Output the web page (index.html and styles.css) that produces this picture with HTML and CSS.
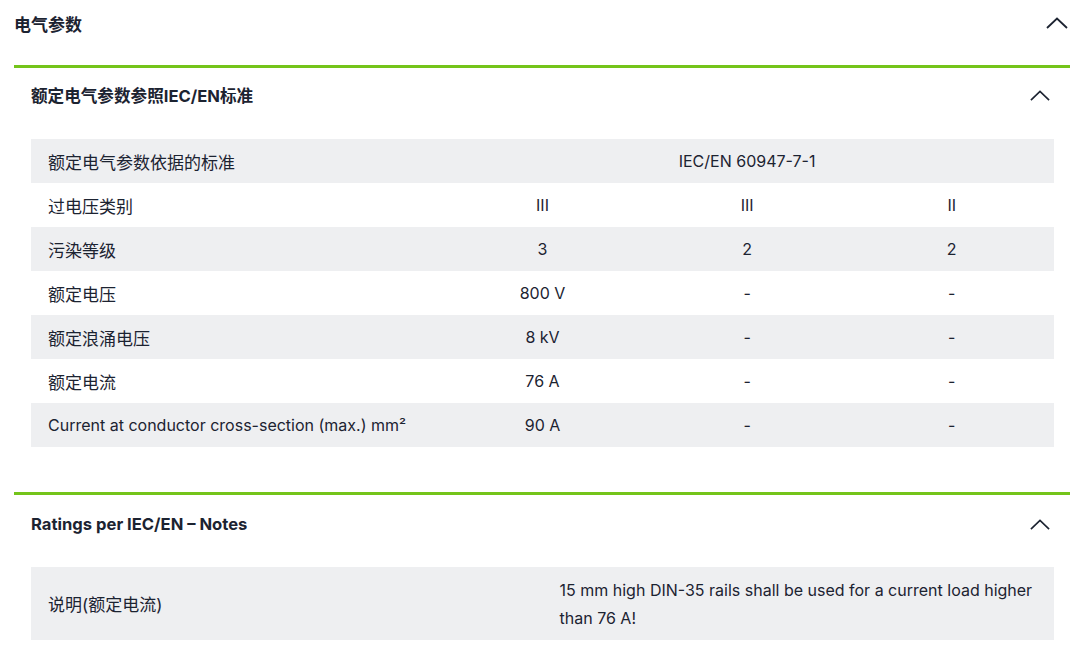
FILE: index.html
```html
<!DOCTYPE html>
<html lang="zh">
<head>
<meta charset="utf-8">
<link rel="stylesheet" href="styles.css">
</head>
<body>
<div class="page">
  <div class="top-head">
    <h2 class="top-title">电气参数</h2>
    <svg class="chev chev-lg" viewBox="0 0 22 12"><path d="M1 11 L11 1.5 L21 11"/></svg>
  </div>

  <section class="panel">
    <div class="panel-head">
      <h3 class="panel-title">额定电气参数参照IEC/EN标准</h3>
      <svg class="chev" viewBox="0 0 22 12"><path d="M1 11 L11 1.5 L21 11"/></svg>
    </div>
    <table class="data">
      <colgroup><col class="c-label"><col class="c-val"><col class="c-val"><col class="c-val"></colgroup>
      <tr><td class="lbl cjk">额定电气参数依据的标准</td><td class="val" colspan="3">IEC/EN 60947-7-1</td></tr>
      <tr><td class="lbl cjk">过电压类别</td><td class="val">III</td><td class="val">III</td><td class="val">II</td></tr>
      <tr><td class="lbl cjk">污染等级</td><td class="val">3</td><td class="val">2</td><td class="val">2</td></tr>
      <tr><td class="lbl cjk">额定电压</td><td class="val">800 V</td><td class="val">-</td><td class="val">-</td></tr>
      <tr><td class="lbl cjk">额定浪涌电压</td><td class="val">8 kV</td><td class="val">-</td><td class="val">-</td></tr>
      <tr><td class="lbl cjk">额定电流</td><td class="val">76 A</td><td class="val">-</td><td class="val">-</td></tr>
      <tr><td class="lbl">Current at conductor cross-section (max.) mm²</td><td class="val">90 A</td><td class="val">-</td><td class="val">-</td></tr>
    </table>
  </section>

  <section class="panel panel-2">
    <div class="panel-head">
      <h3 class="panel-title">Ratings per IEC/EN – Notes</h3>
      <svg class="chev" viewBox="0 0 22 12"><path d="M1 11 L11 1.5 L21 11"/></svg>
    </div>
    <table class="notes">
      <colgroup><col class="n-label"><col class="n-val"></colgroup>
      <tr><td class="lbl cjk">说明(额定电流)</td><td class="note-val">15 mm high DIN-35 rails shall be used for a current load higher than 76 A!</td></tr>
    </table>
  </section>
</div>
</body>
</html>
```

FILE: styles.css
```css
* { box-sizing: border-box; }
html, body { margin: 0; padding: 0; background: #fff; }
body {
  font-family: Inter, "Noto Sans CJK SC", sans-serif;
  color: #1c2331;
  font-size: 16px;
}
.page { padding: 0 4px 0 14px; }
.top-head {
  height: 46px;
  display: flex;
  align-items: center;
  justify-content: space-between;
  padding-right: 2px;
}
.top-title { margin: 0; font-size: 17px; font-weight: 700; }
.chev { width: 20px; height: 11px; fill: none; stroke: #1c2331; stroke-width: 1.8; }
.chev-lg { width: 22px; height: 12px; }
.panel {
  margin-top: 19px;
  border-top: 3px solid #74c41a;
  padding: 0 16px 45px 17px;
}
.panel-2 { margin-top: 0; padding-bottom: 0; }
.panel-head {
  height: 54px;
  display: flex;
  align-items: center;
  justify-content: space-between;
  padding-right: 4px;
}
.panel-2 .panel-head { height: 58px; }
.panel-title { margin: 0; font-size: 16.6px; font-weight: 700; }
table { width: 100%; border-collapse: collapse; margin-top: 17px; table-layout: fixed; }
.panel-2 table { margin-top: 14px; }
.c-label { width: 40%; }
.c-val { width: 20%; }
.data tr { height: 44px; }
.data tr:nth-child(odd) td { background: #eeeff1; }
td { padding: 0 17px; vertical-align: middle; font-size: 16px; }
.lbl { text-align: left; }
.cjk { font-size: 17px; }
.val { text-align: center; }
.n-label { width: 50%; }
.n-val { width: 50%; }
.notes td { background: #eeeff1; }
.note-val { line-height: 28px; padding: 9px 17px 8px; }
```
